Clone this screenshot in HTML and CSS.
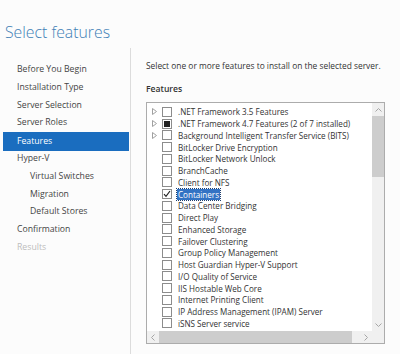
FILE: index.html
```html
<!DOCTYPE html>
<html lang="en">
<head>
  <meta charset="UTF-8" />
  <title>Select features</title>
  <link rel="stylesheet" href="styles.css">
</head>
<body>
  <!-- Header -->
  <h1 class="page-title">Select features</h1>

  <div class="wizard">
    <!-- Wizard steps -->
    <ul class="steps">
      <li>Before You Begin</li>
      <li>Installation Type</li>
      <li>Server Selection</li>
      <li>Server Roles</li>
      <li class="active">Features</li>
      <li>Hyper-V</li>
      <li class="sub">Virtual Switches</li>
      <li class="sub">Migration</li>
      <li class="sub">Default Stores</li>
      <li>Confirmation</li>
      <li class="disabled">Results</li>
    </ul>

    <!-- Feature list -->
    <div class="content">
      <p class="intro">Select one or more features to install on the selected server.</p>
      <h2 class="label">Features</h2>

      <div class="listbox">
        <div class="list-area">
          <ul class="features">
            <li><span class="arrow"><svg width="5" height="7" viewBox="0 0 5 7"><path d="M0.5 0.5 L4.5 3.5 L0.5 6.5 Z" fill="none" stroke="#a0a0a0"/></svg></span><span class="box"></span><span class="name">.NET Framework 3.5 Features</span></li>
            <li><span class="arrow"><svg width="5" height="7" viewBox="0 0 5 7"><path d="M0.5 0.5 L4.5 3.5 L0.5 6.5 Z" fill="none" stroke="#a0a0a0"/></svg></span><span class="box partial"></span><span class="name">.NET Framework 4.7 Features (2 of 7 installed)</span></li>
            <li><span class="arrow"><svg width="5" height="7" viewBox="0 0 5 7"><path d="M0.5 0.5 L4.5 3.5 L0.5 6.5 Z" fill="none" stroke="#a0a0a0"/></svg></span><span class="box"></span><span class="name">Background Intelligent Transfer Service (BITS)</span></li>
            <li><span class="arrow"></span><span class="box"></span><span class="name">BitLocker Drive Encryption</span></li>
            <li><span class="arrow"></span><span class="box"></span><span class="name">BitLocker Network Unlock</span></li>
            <li><span class="arrow"></span><span class="box"></span><span class="name">BranchCache</span></li>
            <li><span class="arrow"></span><span class="box"></span><span class="name">Client for NFS</span></li>
            <li><span class="arrow"></span><span class="box"><svg width="8" height="8" viewBox="0 0 8 8"><path d="M1 4.2 L3 6.3 L7 1" fill="none" stroke="#222" stroke-width="1.2"/></svg></span><span class="name selected">Containers</span></li>
            <li><span class="arrow"></span><span class="box"></span><span class="name">Data Center Bridging</span></li>
            <li><span class="arrow"></span><span class="box"></span><span class="name">Direct Play</span></li>
            <li><span class="arrow"></span><span class="box"></span><span class="name">Enhanced Storage</span></li>
            <li><span class="arrow"></span><span class="box"></span><span class="name">Failover Clustering</span></li>
            <li><span class="arrow"></span><span class="box"></span><span class="name">Group Policy Management</span></li>
            <li><span class="arrow"></span><span class="box"></span><span class="name">Host Guardian Hyper-V Support</span></li>
            <li><span class="arrow"></span><span class="box"></span><span class="name">I/O Quality of Service</span></li>
            <li><span class="arrow"></span><span class="box"></span><span class="name">IIS Hostable Web Core</span></li>
            <li><span class="arrow"></span><span class="box"></span><span class="name">Internet Printing Client</span></li>
            <li><span class="arrow"></span><span class="box"></span><span class="name">IP Address Management (IPAM) Server</span></li>
            <li><span class="arrow"></span><span class="box"></span><span class="name">iSNS Server service</span></li>
          </ul>

          <div class="vscroll">
            <span class="btn"><svg width="7" height="4" viewBox="0 0 7 4"><path d="M0.5 3.5 L3.5 0.5 L6.5 3.5" fill="none" stroke="#a6a6a6"/></svg></span>
            <div class="track"><div class="thumb"></div></div>
            <span class="btn"><svg width="7" height="4" viewBox="0 0 7 4"><path d="M0.5 0.5 L3.5 3.5 L6.5 0.5" fill="none" stroke="#a6a6a6"/></svg></span>
          </div>
        </div>

        <div class="hscroll">
          <span class="btn"><svg width="4" height="7" viewBox="0 0 4 7"><path d="M3.5 0.5 L0.5 3.5 L3.5 6.5" fill="none" stroke="#a6a6a6"/></svg></span>
          <div class="track"><div class="thumb"></div></div>
          <span class="btn"><svg width="4" height="7" viewBox="0 0 4 7"><path d="M0.5 0.5 L3.5 3.5 L0.5 6.5" fill="none" stroke="#a6a6a6"/></svg></span>
          <span class="corner"></span>
        </div>
      </div>
    </div>
  </div>
</body>
</html>
```

FILE: styles.css
```css
* {
  margin: 0; padding: 0; box-sizing: border-box;
  font-family: "Open Sans", "Noto Sans", sans-serif;
}

body {
  background-color: #fcfcfc;
  color: #333;
  width: 400px;
  height: 354px;
  overflow: hidden;
}

.page-title {
  font-size: 15.8px;
  font-weight: 300;
  color: #3f7fb6;
  padding: 20px 0 0 5px;
  height: 48px;
  line-height: 24px;
}

.wizard {
  display: flex;
}

/* Left steps */
.steps {
  list-style: none;
  width: 131px;
  flex-shrink: 0;
  border-right: 1px solid #dcdcdc;
  padding: 13px 1px 0 3px;
  height: 306px;
}

.steps li {
  font-size: 8.7px;
  line-height: 17.8px;
  height: 17.8px;
  padding-left: 14px;
  color: #444;
  white-space: nowrap;
}

.steps li.sub {
  padding-left: 27px;
}

.steps li.active {
  background: #1a6dbf;
  color: #fff;
  height: 19px;
  line-height: 19px;
  margin: -0.6px 0 -0.6px;
}

.steps li.disabled {
  color: #bdbdbd;
}

/* Right content */
.content {
  padding: 11px 0 0 15px;
}

.intro {
  font-size: 8.4px;
  line-height: 14px;
  color: #333;
  white-space: nowrap;
}

.label {
  font-size: 8.6px;
  font-weight: 600;
  line-height: 14px;
  margin-top: 9px;
  color: #333;
}

.listbox {
  margin-top: 6px;
  width: 239px;
  height: 242px;
  border: 1px solid #acacac;
  background: #fff;
  display: flex;
  flex-direction: column;
}

.list-area {
  display: flex;
  flex: 1;
  min-height: 0;
}

.features {
  list-style: none;
  flex: 1;
  min-width: 0;
  padding-top: 3px;
  overflow: hidden;
}

.features li {
  display: flex;
  align-items: center;
  height: 11.75px;
  font-size: 8.1px;
  color: #333;
  white-space: nowrap;
}

.arrow {
  width: 15px;
  flex-shrink: 0;
  padding-left: 5px;
  display: flex;
  align-items: center;
}

.box {
  width: 10px;
  height: 10px;
  border: 1px solid #8c8c8c;
  background: #fff;
  margin-right: 6px;
  display: flex;
  align-items: center;
  justify-content: center;
  flex-shrink: 0;
}

.box.partial::after {
  content: "";
  width: 6px;
  height: 6px;
  background: #222;
}

.name {
  line-height: 11px;
}

.name.selected {
  background: #3373c4;
  color: #fff;
  outline: 1px dotted #1f3f6e;
  padding: 0 1px;
  margin-left: -1px;
}

/* Scrollbars */
.vscroll {
  width: 12px;
  flex-shrink: 0;
  background: #f0f0f0;
  display: flex;
  flex-direction: column;
  align-items: center;
}

.vscroll .btn {
  height: 13px;
  display: flex;
  align-items: center;
}

.vscroll .track {
  flex: 1;
  width: 100%;
}

.vscroll .thumb {
  height: 61px;
  background: #cdcdcd;
}

.hscroll {
  height: 12px;
  flex-shrink: 0;
  background: #f0f0f0;
  display: flex;
  align-items: center;
}

.hscroll .btn {
  width: 12px;
  display: flex;
  justify-content: center;
}

.hscroll .track {
  flex: 1;
  height: 100%;
}

.hscroll .thumb {
  width: 193px;
  height: 100%;
  background: #cdcdcd;
}

.hscroll .corner {
  width: 12px;
  height: 100%;
  background: #f0f0f0;
}
```
